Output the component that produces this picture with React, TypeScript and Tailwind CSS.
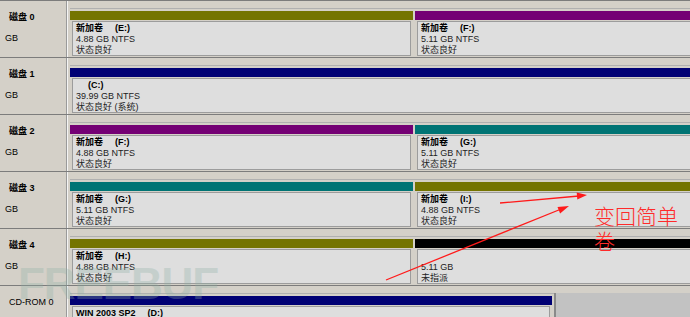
import type { ReactNode } from 'react'

const font = "font-['Liberation_Sans','Noto_Sans_CJK_SC',sans-serif]"

interface Part {
  bar: string
  title?: ReactNode
  size: string
  status: string
  width?: string
}

function Partition({ bar, title, size, status, width = 'w-[343px]' }: Part) {
  return (
    <div className={`flex flex-col shrink-0 ${width}`}>
      <div className={`h-[9px] ${bar}`} />
      <div className="px-[2px] pt-[1px]">
        <div className="h-[35px] border border-[#9c9c9c] bg-[#dedede] pl-[3px] pt-[1px] text-[9px] leading-[11px] text-black whitespace-nowrap overflow-hidden">
          <div className="font-bold h-[11px]">{title ?? '\u00a0'}</div>
          <div className="text-[#222]">{size}</div>
          <div className="text-[#222]">{status}</div>
        </div>
      </div>
    </div>
  )
}

function Title({ name, drive }: { name?: string; drive: string }) {
  return (
    <>
      {name && <span>{name}</span>}
      <span className={name ? 'ml-[12px]' : 'ml-[12px]'}>({drive}:)</span>
    </>
  )
}

function Row({ label, sub, children }: { label: ReactNode; sub?: string; children: ReactNode }) {
  return (
    <div className="flex h-[57px] shrink-0 border-t border-[#7c7c7c] bg-[#d4d0c8]">
      <div className="w-[67px] shrink-0 border-r border-[#9a9a9a] pl-[9px] pt-[11px] text-[9px] leading-[11px] text-black">
        <div className="font-bold whitespace-nowrap">{label}</div>
        {sub && <div className="mt-[10px] -ml-[4px]">{sub}</div>}
      </div>
      <div className="flex-1 min-w-0 overflow-hidden border-l border-[#f4f4f4] pl-[2px]">
        <div className="mt-[7px] border-t border-[#b0b0b0] pt-[2px] flex gap-[2px] h-full">
          {children}
        </div>
      </div>
    </div>
  )
}

export default function App() {
  return (
    <div className={`relative w-[690px] h-[317px] overflow-hidden bg-[#d4d0c8] ${font}`}>
      <div className="flex flex-col">
        <Row label={<>磁盘 0</>} sub="GB">
          <Partition bar="bg-[#747400]" title={<Title name="新加卷" drive="E" />} size="4.88 GB NTFS" status="状态良好" />
          <Partition bar="bg-[#740074]" title={<Title name="新加卷" drive="F" />} size="5.11 GB NTFS" status="状态良好" />
        </Row>
        <Row label={<>磁盘 1</>} sub="GB">
          <Partition bar="bg-[#000074]" title={<Title drive="C" />} size="39.99 GB NTFS" status="状态良好 (系统)" width="w-[700px]" />
        </Row>
        <Row label={<>磁盘 2</>} sub="GB">
          <Partition bar="bg-[#740074]" title={<Title name="新加卷" drive="F" />} size="4.88 GB NTFS" status="状态良好" />
          <Partition bar="bg-[#007474]" title={<Title name="新加卷" drive="G" />} size="5.11 GB NTFS" status="状态良好" />
        </Row>
        <Row label={<>磁盘 3</>} sub="GB">
          <Partition bar="bg-[#007474]" title={<Title name="新加卷" drive="G" />} size="5.11 GB NTFS" status="状态良好" />
          <Partition bar="bg-[#747400]" title={<Title name="新加卷" drive="I" />} size="4.88 GB NTFS" status="状态良好" />
        </Row>
        <Row label={<>磁盘 4</>} sub="GB">
          <Partition bar="bg-[#747400]" title={<Title name="新加卷" drive="H" />} size="4.88 GB NTFS" status="状态良好" />
          <Partition bar="bg-black" size="5.11 GB" status="未指派" />
        </Row>
        <Row label={<span className="font-normal">CD-ROM 0</span>}>
          <Partition bar="bg-[#000074]" title={<>WIN 2003 SP2<span className="ml-[12px]">(D:)</span></>} size="" status="" width="w-[482px]" />
          <div className="flex-1 -mt-[3px] border-l-2 border-[#8a8a8a] bg-[#c2c2c2]" />
        </Row>
      </div>

      {/* watermark */}
      <div className="absolute left-[18px] top-[262px] text-[44px] font-bold tracking-tight leading-none text-[#8fb0a4] opacity-30 pointer-events-none select-none">
        FREEBUF
      </div>

      {/* annotation */}
      <svg className="absolute inset-0 pointer-events-none" width="690" height="317" viewBox="0 0 690 317">
        <line x1="500" y1="203" x2="579" y2="196" stroke="#ff1a1a" strokeWidth="1.3" />
        <polygon points="587,195 577.3,199.4 576.7,192.4" fill="#ff1a1a" />
        <line x1="386" y1="280" x2="560" y2="209.5" stroke="#ff1a1a" strokeWidth="1.3" />
        <polygon points="569,206 560.1,213.4 557.5,206.9" fill="#ff1a1a" />
      </svg>
      <div className="absolute left-[594px] top-[203px] text-[21px] leading-[25px] font-light text-[#ff2a2a] font-['Noto_Sans_CJK_SC',sans-serif]">
        变回简单
        <br />
        卷
      </div>
    </div>
  )
}
